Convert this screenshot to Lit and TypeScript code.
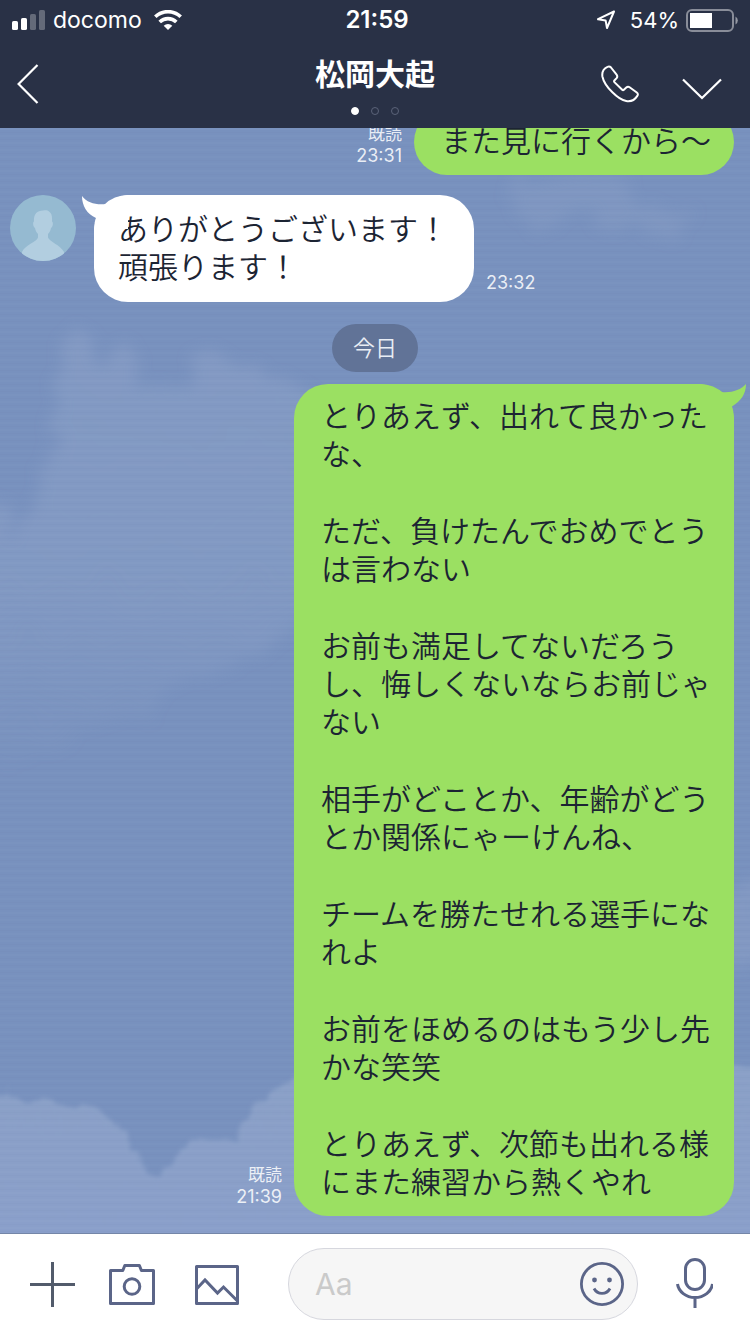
import { LitElement, html, svg, css } from "lit";
import { customElement, property } from "lit/decorators.js";

interface Message {
  from: "me" | "them";
  paragraphs: string[][];
  time: string;
  read?: boolean;
  continued?: boolean;
}

const YESTERDAY: Message[] = [
  { from: "me", paragraphs: [["また見に行くから〜"]], time: "23:31", read: true, continued: true },
  { from: "them", paragraphs: [["ありがとうございます！", "頑張ります！"]], time: "23:32" },
];

const TODAY: Message[] = [
  {
    from: "me",
    time: "21:39",
    read: true,
    paragraphs: [
      ["とりあえず、出れて良かった", "な、"],
      ["ただ、負けたんでおめでとう", "は言わない"],
      ["お前も満足してないだろう", "し、悔しくないならお前じゃ", "ない"],
      ["相手がどことか、年齢がどう", "とか関係にゃーけんね、"],
      ["チームを勝たせれる選手にな", "れよ"],
      ["お前をほめるのはもう少し先", "かな笑笑"],
      ["とりあえず、次節も出れる様", "にまた練習から熱くやれ"],
    ],
  },
];

const shared = css`
  * { box-sizing: border-box; }
  svg { display: block; }
  button {
    display: block;
    margin: 0;
    padding: 0;
    border: 0;
    background: none;
    color: inherit;
    cursor: pointer;
  }
`;

@customElement("status-bar")
class StatusBar extends LitElement {
  static styles = [shared, css`
    :host {
      display: grid;
      grid-template-columns: 1fr auto 1fr;
      align-items: center;
      height: 40px;
      padding: 0 11px 0 12px;
      font-size: 23px;
      line-height: 40px;
    }
    .left, .right { display: flex; align-items: center; }
    .left { gap: 8px; }
    .carrier { margin-right: 4px; }
    .right { justify-content: flex-end; gap: 7px; font-size: 22px; }
    .place { margin-right: 7px; }
    .clock { padding-left: 3px; font-size: 24px; font-weight: 600; }
  `];
  render() {
    return html`
      <div class="left">
        <svg width="33" height="20" viewBox="0 0 33 20" fill="#fff">
          <rect x="0" y="11" width="6" height="9" rx="1.6"/>
          <rect x="9" y="8" width="6" height="12" rx="1.6"/>
          <rect x="18" y="4" width="6" height="16" rx="1.6" opacity=".28"/>
          <rect x="27" y="0" width="6" height="20" rx="1.6" opacity=".28"/>
        </svg>
        <span class="carrier">docomo</span>
        <svg width="28" height="20" viewBox="0 0 28 20" fill="none" stroke="#fff" stroke-width="3.6">
          <path d="M1.3 6.8a18.2 18.2 0 0 1 25.4 0"/>
          <path d="M5.700 12a11.800 11.800 0 0 1 16.600 0"/>
          <path d="M14 20l-4.3-4.3a6 6 0 0 1 8.6 0z" fill="#fff" stroke="none"/>
        </svg>
      </div>
      <div class="clock">21:59</div>
      <div class="right">
        <svg class="place" width="20" height="20" viewBox="0 0 20 20" fill="none" stroke="#fff" stroke-width="2" stroke-linejoin="round">
          <path d="M18 1.5L2 9.2l7.6 1.2L11 18z"/>
        </svg>
        <span>54%</span>
        <svg width="53" height="23" viewBox="0 0 53 23">
          <rect x="1" y="1" width="46" height="21" rx="5" fill="none" stroke="#fff" stroke-opacity=".45" stroke-width="2"/>
          <rect x="4" y="4" width="22" height="15" fill="#fff"/>
          <path d="M49.500 7.500a4.600 4.600 0 0 1 0 8z" fill="#fff" fill-opacity=".5"/>
        </svg>
      </div>
    `;
  }
}

@customElement("chat-nav")
class ChatNav extends LitElement {
  @property() name = "";
  static styles = [shared, css`
    :host {
      display: grid;
      grid-template-columns: 1fr auto 1fr;
      height: 88px;
      padding: 0 28px 0 17px;
    }
    .back { align-self: center; justify-self: start; }
    .title {
      display: flex;
      flex-direction: column;
      align-items: center;
      padding: 14px 0 0 11px;
    }
    h1 { margin: 0; font-size: 30px; line-height: 40px; font-weight: 700; }
    .dots { display: flex; gap: 12px; padding-top: 13px; }
    .dot { width: 8px; height: 8px; border-radius: 50%; border: 1px solid #5b6379; }
    .dot.on { background: #fff; border-color: #fff; }
    .actions { display: flex; justify-content: flex-end; align-items: center; gap: 43px; }
  `];
  render() {
    return html`
      <button class="back" aria-label="戻る">
        <svg width="22" height="40" viewBox="0 0 22 40" fill="none" stroke="#fff" stroke-width="2.2">
          <path d="M20.500 1L1.600 20l18.900 19"/>
        </svg>
      </button>
      <div class="title">
        <h1>${this.name}</h1>
        <div class="dots"><span class="dot on"></span><span class="dot"></span><span class="dot"></span></div>
      </div>
      <div class="actions">
        <button aria-label="通話">
          <svg width="38" height="38" viewBox="0 0 38 38" fill="none" stroke="#fff" stroke-width="2" stroke-linejoin="round">
            <path d="M6.500 1.800C7.800 1.200 9 1.400 10 2.500l5.600 7.200c1 1.300.9 2.300 0 3.400l-2.200 2.400c-.5.600-.5 1 0 1.600l7.800 7.600c.6.6 1.100.6 1.700 0l2.400-2.200c1-.9 2.200-1 3.300-.2l7.200 5.200c1.200.9 1.400 2.200.5 3.400-2.600 4.200-6.600 6-11.100 5.200-5-1-9.500-4.500-13.800-8.800C6.500 22.500 2.500 17 1.400 11.500.8 7 2.500 3.500 6.500 1.800z"/>
          </svg>
        </button>
        <button aria-label="メニュー">
          <svg width="40" height="32" viewBox="0 0 40 32" fill="none" stroke="#fff" stroke-width="2.200">
            <path d="M1 11.500l19 18.500 19-18.500"/>
          </svg>
        </button>
      </div>
    `;
  }
}

@customElement("sky-backdrop")
class SkyBackdrop extends LitElement {
  static styles = [shared, css`
    :host { display: block; background: #7891be; }
    svg { width: 100%; height: 100%; }
  `];
  render() {
    return html`
      <svg viewBox="0 0 750 1105" preserveAspectRatio="xMidYMax slice" aria-hidden="true">
        <defs>
          <linearGradient id="low" x1="0" y1="0" x2="0" y2="1">
            <stop offset="0" stop-color="#8aa0c6"/>
            <stop offset="1" stop-color="#8a9fcb"/>
          </linearGradient>
          <linearGradient id="mid" x1="0" y1="0" x2="0" y2="1">
            <stop offset="0" stop-color="#8da2c8" stop-opacity=".5"/>
            <stop offset=".55" stop-color="#8da2c8" stop-opacity=".46"/>
            <stop offset="1" stop-color="#8da2c8" stop-opacity="0"/>
          </linearGradient>
          <filter id="wisp" x="-20%" y="-20%" width="140%" height="140%">
            <feTurbulence type="fractalNoise" baseFrequency=".022" numOctaves="5" seed="11"/>
            <feDisplacementMap in="SourceGraphic" scale="60" xChannelSelector="R" yChannelSelector="G"/>
            <feGaussianBlur stdDeviation="7"/>
          </filter>
          <filter id="edge" x="-10%" y="-10%" width="120%" height="120%">
            <feTurbulence type="fractalNoise" baseFrequency=".05" numOctaves="5" seed="3"/>
            <feDisplacementMap in="SourceGraphic" scale="24" xChannelSelector="R" yChannelSelector="G"/>
            <feGaussianBlur stdDeviation="2"/>
          </filter>
          <pattern id="weave" width="750" height="7" patternUnits="userSpaceOnUse">
            <rect width="750" height="2" fill="#fff" opacity=".014"/>
            <rect y="4" width="750" height="1" fill="#24406e" opacity=".02"/>
          </pattern>
        </defs>
        <g filter="url(#wisp)">
          <path fill="url(#mid)" d="M-30 350l50 60 20-60 20-70 10-60 65 10 20 40 30-5 15-35 60 5 60 40 50 30v180l-80 20-80 40-110 60-130 40z"/>
          <path fill="#8da2c8" fill-opacity=".3" d="M500 65l60-10 60-12 20 30 60 20-60 5-50-10-60 8z"/>
          <path fill="#8da2c8" fill-opacity=".45" d="M715 770l60-15v80l-50 10z"/>
        </g>
        <path filter="url(#edge)" fill="url(#low)" d="M-20 968q25-8 45 4l40 2q45 10 55 26 15 22 25 42 18 8 40-22 20-15 50-12 25-50 75-62h90l350-10 110-20v260H-20z"/>
        <rect width="750" height="1105" fill="url(#weave)"/>
      </svg>
    `;
  }
}

@customElement("chat-message")
class ChatMessage extends LitElement {
  @property({ attribute: false }) message!: Message;
  static styles = [shared, css`
    :host { display: block; }
    .row { display: flex; align-items: flex-end; }
    .row.me { justify-content: flex-end; padding-right: 16px; }
    .row.them { padding-left: 10px; }
    .avatar { align-self: flex-start; margin-right: 18px; }
    .bubble {
      position: relative;
      border-radius: 34px;
      color: #1c2433;
      font-size: 30px;
      line-height: 38px;
      font-weight: 350;
    }
    .me .bubble { padding: 13px 23px 15px 27px; background: #9be062; order: 2; }
    .them .bubble { padding: 15px 26px 16px 24px; background: #fff; }
    .bubble p { margin: 0; }
    .bubble p + p { margin-top: 39px; }
    .line { display: block; }
    .tail { position: absolute; top: 0; }
    .me .tail { right: -12px; fill: #9be062; }
    .them .tail { left: -12px; fill: #fff; }
    .meta {
      padding: 0 12px 8px;
      color: rgba(255, 255, 255, .86);
      font-size: 17px;
      line-height: 22px;
      text-align: right;
    }
    .time { display: block; font-size: 18px; }
  `];
  render() {
    const m = this.message;
    const mine = m.from === "me";
    const tail = mine
      ? svg`<path d="M0 0c10 1 17 5 22 8 9 1 19-2 24-8 0 10-5 17-14 22.500L34 34H0z"/>`
      : svg`<path d="M46 0C36 1 29 5 24 9 14 10 5 8 0 1c0 10 5 18 14 22l-2 11h34z"/>`;
    return html`
      <div class="row ${m.from}">
        ${mine ? "" : html`
          <svg class="avatar" width="66" height="66" viewBox="0 0 66 66">
            <clipPath id="face"><circle cx="33" cy="33" r="33"/></clipPath>
            <circle cx="33" cy="33" r="33" fill="#95bad1"/>
            <path clip-path="url(#face)" fill="#b2cee0" d="M33 15.500c3-.6 5-.2 6 1 2.500 1.500 3.400 4.500 3 10 1.500.8 1 5-1 6.500-.6 3-1.500 4.500-3 6v3.500c1.500 4.500 12 7 16 14.500V66H12v-9c3-7 14.500-10 16-14.500V39c-1.500-1.500-2.400-3-3-6-2-1.500-2.500-5.700-1-6.500-.6-6.500 2.500-11 9-11z"/>
          </svg>`}
        <div class="bubble">
          ${m.continued ? "" : html`<svg class="tail" width="46" height="34" viewBox="0 0 46 34">${tail}</svg>`}
          ${m.paragraphs.map((p) => html`<p>${p.map((l) => html`<span class="line">${l}</span>`)}</p>`)}
        </div>
        <div class="meta">
          ${m.read ? html`<span>既読</span>` : ""}
          <span class="time">${m.time}</span>
        </div>
      </div>
    `;
  }
}

@customElement("message-composer")
class MessageComposer extends LitElement {
  static styles = [shared, css`
    :host {
      display: grid;
      grid-template-columns: 80px 85px 94px minmax(0, 1fr) 112px;
      align-items: center;
      height: 101px;
      padding-left: 29px;
      border-top: 1px solid #7486a8;
      background: #fff;
      color: #5b6588;
    }
    .field {
      display: flex;
      align-items: center;
      height: 72px;
      padding: 0 13px 0 26px;
      border: 1px solid #d6d7de;
      border-radius: 36px;
      background: #f6f6f6;
    }
    input {
      flex: 1;
      min-width: 0;
      height: 60px;
      padding: 0;
      border: 0;
      outline: 0;
      background: none;
      color: #1c2433;
      font: 30px Inter, "Noto Sans CJK JP", sans-serif;
    }
    input::placeholder { color: #cacaca; opacity: 1; }
    .mic { justify-self: center; }
  `];
  render() {
    return html`
      <button aria-label="追加">
        <svg width="46" height="46" viewBox="0 0 46 46" fill="none" stroke="#525b6b" stroke-width="3"><path d="M23.500 1v45M1 23.500h45"/></svg>
      </button>
      <button aria-label="カメラ">
        <svg width="46" height="46" viewBox="0 0 46 46" fill="none" stroke="currentColor" stroke-width="3" stroke-linejoin="round">
          <path d="M1.500 9.500h12.300l2-5h14.600l2 5h12.100v33h-43z"/><circle cx="23" cy="25.500" r="7.800"/>
        </svg>
      </button>
      <button aria-label="写真">
        <svg width="46" height="46" viewBox="0 0 46 46" fill="none" stroke="currentColor" stroke-width="3" stroke-linejoin="round">
          <path d="M2.500 5.500h41v37h-41z"/><path d="M2.500 28l8.500-9 12.500 13 6-6 14 14" stroke-linejoin="miter"/>
        </svg>
      </button>
      <div class="field">
        <input type="text" placeholder="Aa" aria-label="メッセージ">
        <button aria-label="スタンプ">
          <svg width="44" height="44" viewBox="0 0 44 44" fill="none" stroke="currentColor" stroke-width="2.800">
            <circle cx="22" cy="22" r="20.600"/>
            <path d="M14 26.500c3.500 6.500 12.500 6.500 16 0"/>
            <g fill="currentColor" stroke="none"><circle cx="14.500" cy="18" r="2.400"/><circle cx="29.500" cy="18" r="2.400"/></g>
          </svg>
        </button>
      </div>
      <button class="mic" aria-label="音声">
        <svg width="38" height="52" viewBox="0 0 38 52" fill="none" stroke="currentColor" stroke-width="3">
          <rect x="10.500" y="1.500" width="19" height="30" rx="9.500"/>
          <path d="M2.500 26c1 7.500 8.500 13.500 17.500 13.500S36.500 33.500 37.500 26M20 39.500V50"/>
        </svg>
      </button>
    `;
  }
}

@customElement("app-root")
class AppRoot extends LitElement {
  static styles = [shared, css`
    :host {
      display: flex;
      flex-direction: column;
      height: 100vh;
      font-family: Inter, "Noto Sans CJK JP", sans-serif;
    }
    header { background: #293146; color: #fff; }
    main {
      position: relative;
      flex: 1;
      min-height: 0;
      display: flex;
      flex-direction: column;
      justify-content: flex-end;
      overflow: hidden;
    }
    .sky { position: absolute; inset: 0; }
    .thread {
      position: relative;
      display: flex;
      flex-direction: column;
      padding-bottom: 17px;
    }
    .group { display: flex; flex-direction: column; gap: 20px; }
    .day {
      align-self: center;
      margin: 22px 0 12px;
      padding: 0 21px;
      border-radius: 24px;
      background: #617397;
      color: #e9edf4;
      font-size: 22px;
      line-height: 48px;
      font-weight: 350;
    }
  `];
  render() {
    const list = (ms: Message[]) => html`
      <div class="group">${ms.map((m) => html`<chat-message .message=${m}></chat-message>`)}</div>`;
    return html`
      <header>
        <status-bar></status-bar>
        <chat-nav name="松岡大起"></chat-nav>
      </header>
      <main>
        <sky-backdrop class="sky"></sky-backdrop>
        <div class="thread">
          ${list(YESTERDAY)}
          <div class="day">今日</div>
          ${list(TODAY)}
        </div>
      </main>
      <message-composer></message-composer>
    `;
  }
}
